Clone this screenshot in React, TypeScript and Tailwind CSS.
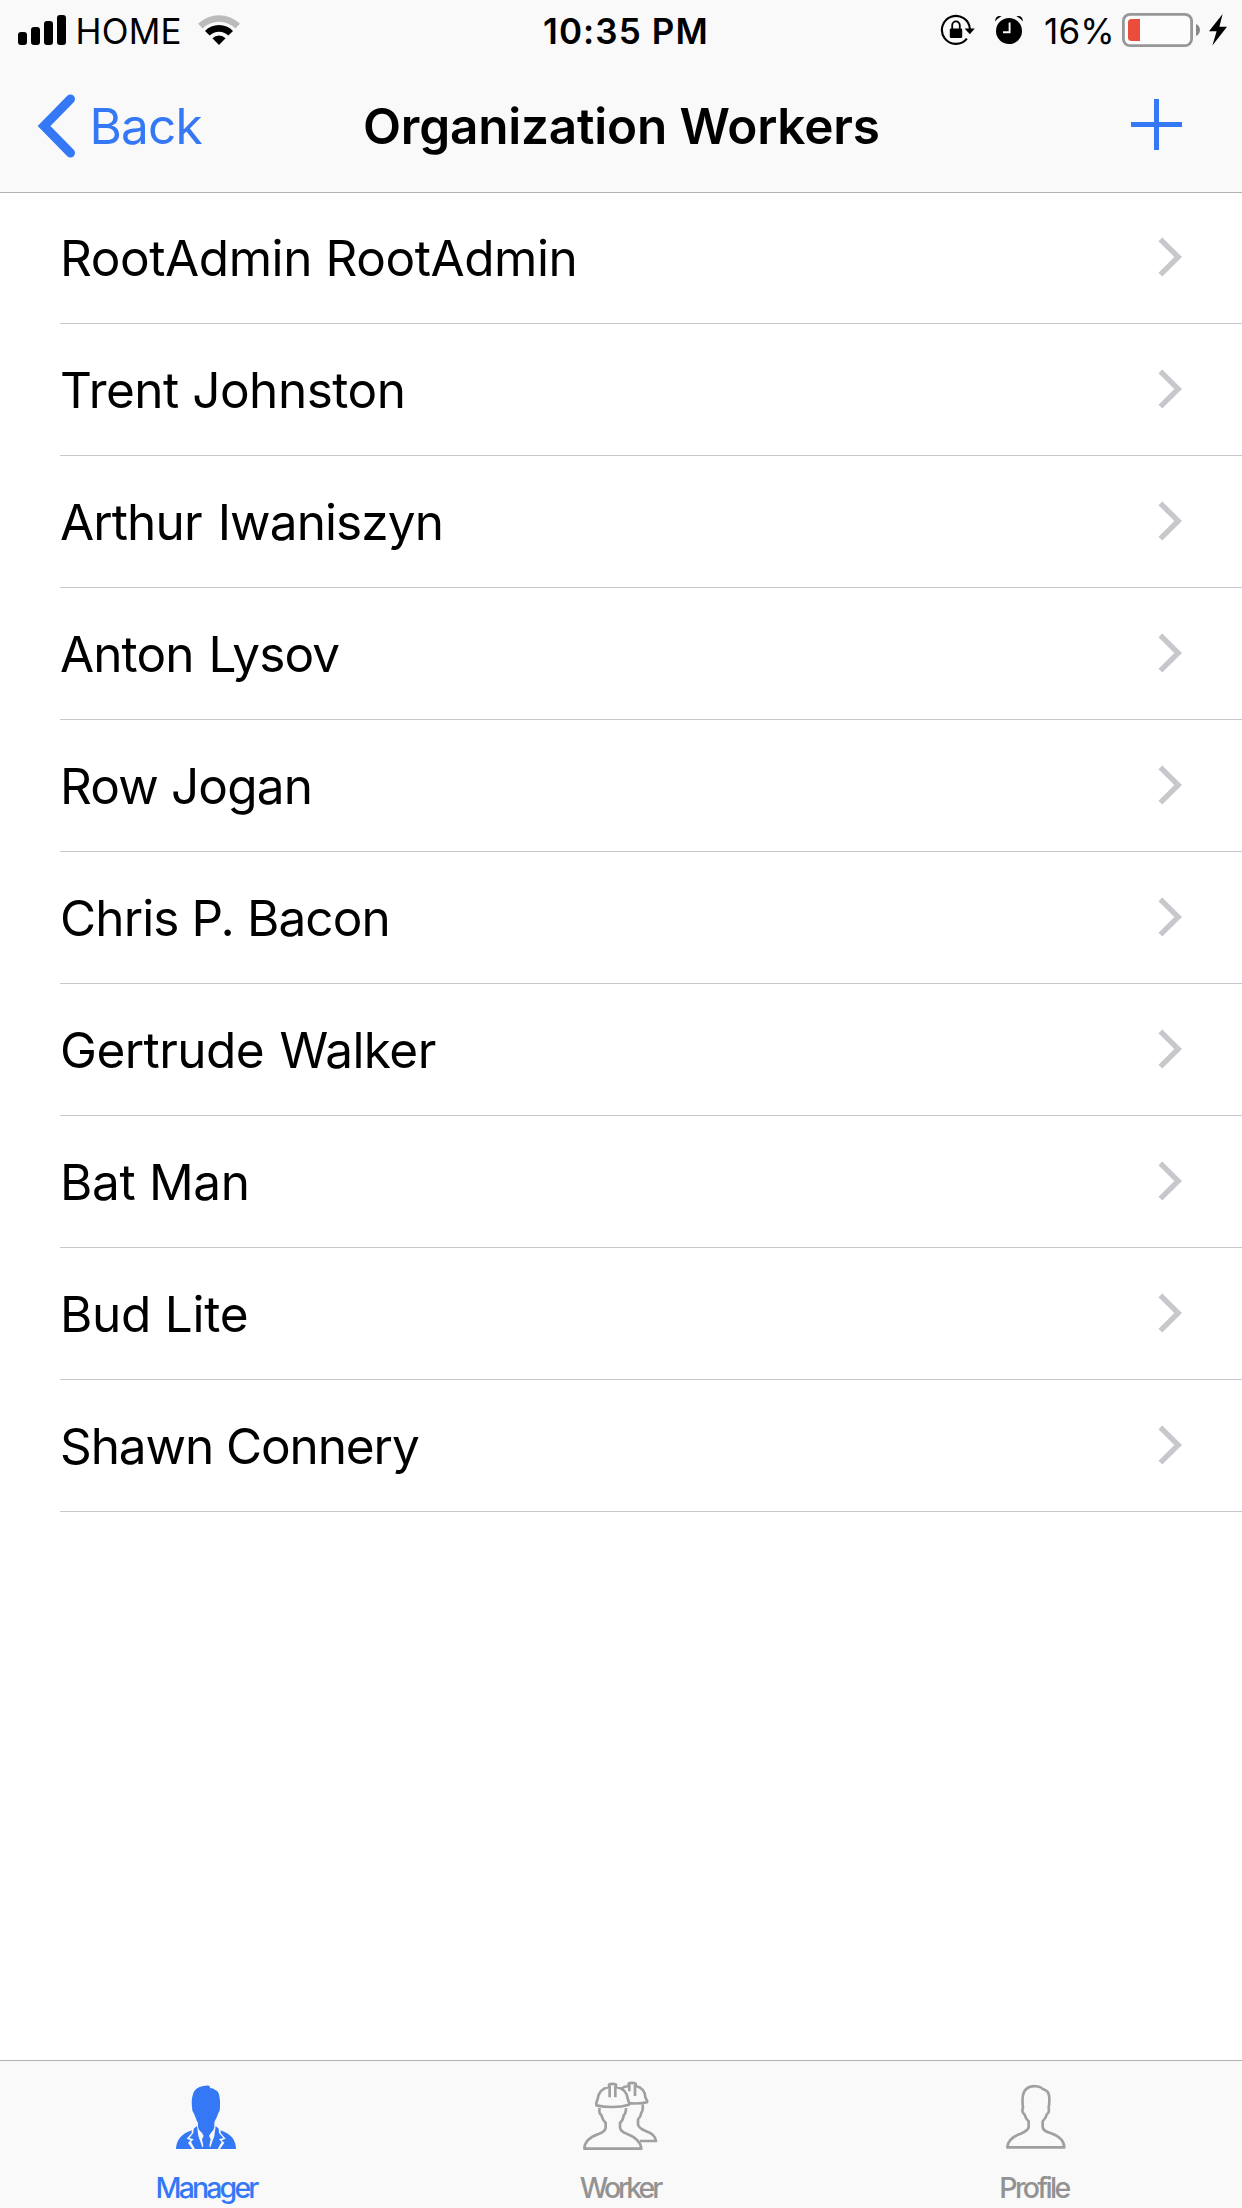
import React from "react";

type Worker = { name: string; tracking: string };

const workers: Worker[] = [
  { name: "RootAdmin RootAdmin", tracking: "tracking-[-0.42px]" },
  { name: "Trent Johnston", tracking: "tracking-[-0.5px]" },
  { name: "Arthur Iwaniszyn", tracking: "tracking-[-0.88px] [word-spacing:3px]" },
  { name: "Anton Lysov", tracking: "tracking-[-0.89px] [word-spacing:2px]" },
  { name: "Row Jogan", tracking: "tracking-[-0.85px]" },
  { name: "Chris P. Bacon", tracking: "tracking-[-0.9px]" },
  { name: "Gertrude Walker", tracking: "tracking-[-0.55px] [word-spacing:2px]" },
  { name: "Bat Man", tracking: "tracking-[-0.35px]" },
  { name: "Bud Lite", tracking: "tracking-[-0.27px]" },
  { name: "Shawn Connery", tracking: "tracking-[-1.1px]" },
];

function SignalIcon() {
  return (
    <svg className="ml-[18px] h-[30px] w-[48px] shrink-0" viewBox="0 0 48 30">
      <rect x="0" y="17" width="9" height="13" rx="3" />
      <rect x="13" y="12" width="9" height="18" rx="3" />
      <rect x="26" y="6" width="9" height="24" rx="3" />
      <rect x="39" y="0" width="9" height="30" rx="3" />
    </svg>
  );
}

function WifiIcon() {
  return (
    <svg className="h-[30px] w-[42px] shrink-0" viewBox="0 0 42 30">
      <path d="M0 8.8A29.8 29.8 0 0 1 42 8.8L37.4 13.4A23.3 23.3 0 0 0 4.6 13.4Z" fill="#bbbbbb" />
      <path d="M7 15.9A19.8 19.8 0 0 1 35 15.9L30.3 20.6A13.2 13.2 0 0 0 11.7 20.6Z" />
      <path d="M14.4 23.3A9.4 9.4 0 0 1 27.6 23.3L21 30Z" />
    </svg>
  );
}

function RotationLockIcon() {
  return (
    <svg className="h-[32px] w-[35px] shrink-0" viewBox="0 0 35 32">
      <path d="M29.9 15A14 14 0 1 0 26.9 24.6" fill="none" stroke="#000" strokeWidth="2.1" />
      <path d="M24.6 14.6H34.8L29.8 20.2Z" />
      <rect x="9.8" y="14.6" width="12.4" height="9.4" rx="1.2" />
      <path d="M12.2 15.5V11.2A3.8 3.8 0 0 1 19.8 11.2V15.5" fill="none" stroke="#000" strokeWidth="1.8" />
    </svg>
  );
}

function AlarmIcon() {
  return (
    <svg className="ml-[20px] h-[32px] w-[28px] shrink-0" viewBox="0 0 28 32">
      <circle cx="14" cy="17" r="13" />
      <path d="M0.3 7.6C-0.4 3 3.6 0.8 6.8 2.6C4.2 3.4 1.8 5.2 0.3 7.6Z" />
      <path d="M27.7 7.6C28.4 3 24.4 0.8 21.2 2.6C23.8 3.4 26.2 5.2 27.7 7.6Z" />
      <path d="M14.6 8.6V18.3H8" fill="none" stroke="#f9f9f9" strokeWidth="1.9" />
    </svg>
  );
}

function BatteryIcon() {
  return (
    <svg className="h-[34px] w-[78px] shrink-0" viewBox="0 0 78 34">
      <rect x="1.4" y="1.4" width="68.2" height="31.2" rx="6.6" fill="#fcfcfc" stroke="#979797" strokeWidth="2.8" />
      <path d="M18 6V28H9.5A3.5 3.5 0 0 1 6 24.5V9.5A3.5 3.5 0 0 1 9.5 6Z" fill="#eb4d3d" />
      <path d="M74 11C79.3 13 79.3 21 74 23Z" fill="#888888" />
    </svg>
  );
}

function BoltIcon() {
  return (
    <svg className="ml-[9px] h-[32px] w-[18px] shrink-0" viewBox="0 0 18 32">
      <path d="M13.6 0L0 17.3H7.6L3.4 31.6L18 12.7H10.4Z" />
    </svg>
  );
}

function StatusBar() {
  return (
    <div className="flex h-[60px] items-center text-[35px] leading-[60px]">
      <div className="flex w-[543px] items-center">
        <SignalIcon />
        <span className="ml-[9.5px] w-[122.5px] pt-[2.5px] tracking-[0.2px]">HOME</span>
        <WifiIcon />
      </div>
      <span className="w-[397px] pt-[2.5px] font-semibold tracking-[1.1px] whitespace-nowrap">10:35 PM</span>
      <RotationLockIcon />
      <AlarmIcon />
      <span className="ml-[21px] w-[78px] pt-[2.5px] tracking-[0.2px]">16%</span>
      <BatteryIcon />
      <BoltIcon />
    </div>
  );
}

function NavBar() {
  return (
    <div className="flex h-[132px] items-center text-[49.5px] leading-[60px]">
      <button className="flex w-[363px] items-center text-[#3478f6]">
        <svg className="ml-[36px] h-[66px] w-[42px] shrink-0" viewBox="0 0 42 66" fill="none" stroke="currentColor">
          <path d="M34.5 6L8 33L34.5 60" strokeWidth="9" strokeLinecap="round" />
        </svg>
        <span className="ml-[11.5px] tracking-[-0.85px]">Back</span>
      </button>
      <h1 className="flex-1 font-semibold tracking-[-0.2px] whitespace-nowrap">Organization Workers</h1>
      <button className="mr-[60px] mb-[3px] text-[#3478f6]">
        <svg className="block h-[51px] w-[51px]" viewBox="0 0 51 51" fill="currentColor">
          <path d="M23 0H28V23H51V28H28V51H23V28H0V23H23Z" />
        </svg>
      </button>
    </div>
  );
}

function WorkerRow({ name, tracking }: Worker) {
  return (
    <li className="ml-[60px] flex h-[132px] items-center justify-between border-b border-[#c8c7cc] pr-[60px] first:h-[131px]">
      <span className={`text-[49.5px] leading-[60px] whitespace-nowrap ${tracking}`}>{name}</span>
      <svg className="mb-[2px] h-[40px] w-[24px]" viewBox="0 0 24 40" fill="none" stroke="#c7c7cc">
        <path d="M2.4 2.3L20.2 20L2.4 37.7" strokeWidth="5.4" />
      </svg>
    </li>
  );
}

function ManagerIcon() {
  return (
    <svg className="h-[82px] w-[80px]" viewBox="81 60 240 246" fill="currentColor">
      <path d="M208 107L211 115Q219 114 224 119Q236 122 238 138Q241 150 240 171Q240 184 235 189L229 205Q223 213 223 220V232Q222 241 212 250L207 258L212 268L208 288L214 297H184L190 288L186 268L191 258L186 249Q175 241 174 232V218Q170 213 167 203L161 189Q156 184 156 171Q154 150 157 140Q160 120 177 112Q190 106 208 107Z" />
      <path d="M171 228L161 236L160 249L148 264L161 268L153 276L165 297H189L175 258Z" />
      <path d="M227 228L236 236L237 249L250 264L237 268L245 276L233 297H209L223 258Z" />
      <path d="M155 241V249L140 266L152 271L144 278L157 297H108Q109 276 121 262Q132 249 155 241Z" />
      <path d="M242 241V249L257 266L245 271L253 278L240 297H288Q287 276 276 262Q264 249 242 241Z" />
    </svg>
  );
}

function WorkerIcon() {
  return (
    <svg
      className="h-[82px] w-[80px]"
      viewBox="63 60 240 246"
      fill="none"
      stroke="currentColor"
      strokeWidth="8"
      strokeLinejoin="round"
    >
      <path d="M119 174C117 184 118 192 124 195C126 205 130 212 137 219V233C136 244 126 249 114 253C94 260 74 272 73 296H244C242 272 222 260 202 252C190 248 181 243 180 232V219C187 213 190 206 191 196C198 191 198 184 198 174" />
      <path d="M109 166C107 157 112 153 113 146C116 126 126 115 147 111V104C151 101 163 101 168 104V111C191 115 201 128 203 146C205 152 209 157 207 164C178 173 138 173 109 166Z" />
      <path d="M149 108V142M166 108V142" />
      <path d="M184 116C190 111 197 109 206 108V101C210 98 221 98 227 101V108C246 112 255 125 256 142C258 147 263 151 261 157C246 161 229 161 210 160" />
      <path d="M208 104V124M225 105V138" />
      <path d="M248 163C249 176 248 184 244 188C243 197 239 203 234 208V222C234 233 245 238 257 243C274 249 287 257 288 273H239" />
    </svg>
  );
}

function ProfileIcon() {
  return (
    <svg
      className="h-[82px] w-[80px]"
      viewBox="45 60 240 246"
      fill="none"
      stroke="currentColor"
      strokeWidth="8"
      strokeLinejoin="round"
    >
      <path d="M82 292H253C252 268 233 257 213 250C199 246 189 241 188 231V214C195 207 199 202 200 194C207 189 208 182 206 174C209 155 209 142 206 132C203 122 196 119 188 117C181 107 153 105 140 116C127 126 125 144 129 174C125 180 128 190 134 194C136 203 140 208 146 214V231C145 241 135 246 122 251C102 258 83 268 82 292Z" />
    </svg>
  );
}

function TabBar() {
  return (
    <nav className="grid h-[148px] grid-cols-3 border-t border-[#b2b2b2] bg-[#f9f9f9] text-[28.5px] leading-[40px] font-medium">
      <button className="flex flex-col items-center pt-[9px] text-[#3478f6]">
        <ManagerIcon />
        <span className="mt-[16px] pr-[2px] tracking-[-2.85px]">Manager</span>
      </button>
      <button className="flex flex-col items-center pt-[9px] text-[#a0a0a0]">
        <WorkerIcon />
        <span className="mt-[16px] pr-[2px] tracking-[-3.1px] text-[#929292]">Worker</span>
      </button>
      <button className="flex flex-col items-center pt-[9px] text-[#a0a0a0]">
        <ProfileIcon />
        <span className="mt-[16px] pr-[2px] tracking-[-2.65px] text-[#929292]">Profile</span>
      </button>
    </nav>
  );
}

export default function App() {
  return (
    <div className="flex h-[2208px] w-[1242px] flex-col overflow-hidden bg-white font-['Inter',sans-serif] text-black">
      <header className="border-b border-[#b2b2b2] bg-[#f9f9f9]">
        <StatusBar />
        <NavBar />
      </header>
      <ul className="flex-1">
        {workers.map((worker) => (
          <WorkerRow key={worker.name} {...worker} />
        ))}
      </ul>
      <TabBar />
    </div>
  );
}
